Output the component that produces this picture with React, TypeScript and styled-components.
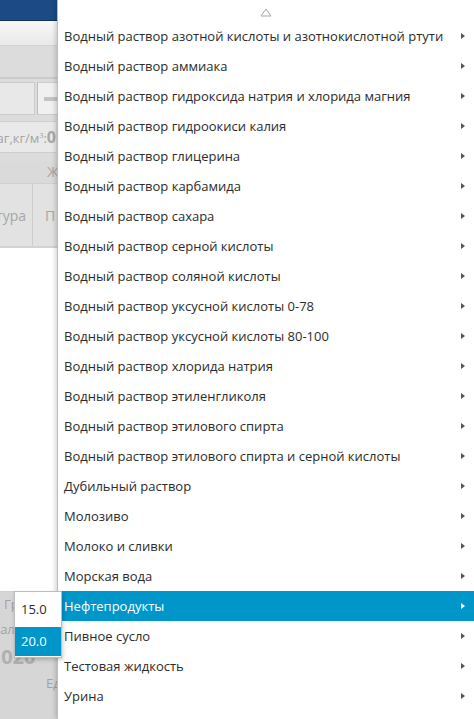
import styled, { createGlobalStyle } from "styled-components";

const items = [
  "Водный раствор азотной кислоты и азотнокислотной ртути",
  "Водный раствор аммиака",
  "Водный раствор гидроксида натрия и хлорида магния",
  "Водный раствор гидроокиси калия",
  "Водный раствор глицерина",
  "Водный раствор карбамида",
  "Водный раствор сахара",
  "Водный раствор серной кислоты",
  "Водный раствор соляной кислоты",
  "Водный раствор уксусной кислоты 0-78",
  "Водный раствор уксусной кислоты 80-100",
  "Водный раствор хлорида натрия",
  "Водный раствор этиленгликоля",
  "Водный раствор этилового спирта",
  "Водный раствор этилового спирта и серной кислоты",
  "Дубильный раствор",
  "Молозиво",
  "Молоко и сливки",
  "Морская вода",
  "Нефтепродукты",
  "Пивное сусло",
  "Тестовая жидкость",
  "Урина",
];

const Accent = "#0096c9";

const GlobalStyle = createGlobalStyle`
  html, body {
    margin: 0;
    padding: 0;
    background: #ffffff;
  }
  body {
    font-family: "Open Sans", "Noto Sans", sans-serif;
  }
`;

const App = () => {
  return (
    <Screen>
      <GlobalStyle />
      <Backdrop>
        <TitleBar />
        <Toolbar />
        <GreyBand />
        <ButtonRow>
          <ToolButton />
          <ToolButton $wide>
            <Dash />
          </ToolButton>
        </ButtonRow>
        <FieldRow>
          <span>
            Плотность, маг,кг/м<sup>3</sup>:<b>0</b>
          </span>
        </FieldRow>
        <GroupHeader>Ж</GroupHeader>
        <TableHead>
          <HeadCell $w={33}>Температура</HeadCell>
          <HeadCell $w={60}>П</HeadCell>
        </TableHead>
        <TableBody />
        <Footer>
          <FooterLabel>Группа</FooterLabel>
          <FooterLabel $shift={-26}>Шкала</FooterLabel>
          <FooterValue>1.020</FooterValue>
          <FooterUnit>Ед</FooterUnit>
        </Footer>
      </Backdrop>

      <Menu>
        <ScrollUp>
          <svg width="12" height="9" viewBox="0 0 12 9">
            <path d="M6 1 L11 8 L1 8 Z" fill="none" stroke="#a8a8a8" strokeWidth="1" />
          </svg>
        </ScrollUp>
        {items.map((label) => {
          const active = label === "Нефтепродукты";
          return (
            <MenuItem key={label} $active={active}>
              <span>{label}</span>
              <Caret $active={active} />
            </MenuItem>
          );
        })}
      </Menu>

      <SubMenu>
        <SubItem>15.0</SubItem>
        <SubItem $active>20.0</SubItem>
      </SubMenu>
    </Screen>
  );
};

const Screen = styled.div`
  position: relative;
  width: 474px;
  height: 719px;
  overflow: hidden;
`;

const Backdrop = styled.div`
  display: flex;
  flex-direction: column;
  width: 474px;
  height: 719px;
  background: #dcdcdc;
  color: #9a9a9a;
  font-size: 13px;
`;

const TitleBar = styled.div`
  height: 20px;
  background: #1c4a84;
  border-bottom: 1px solid #10325c;
`;

const Toolbar = styled.div`
  height: 24px;
  background: linear-gradient(#f8f8f8, #e9e9e9);
  border-bottom: 1px solid #d2d2d2;
`;

const GreyBand = styled.div`
  height: 31px;
  background: #dcdcdc;
  border-bottom: 2px solid #cbcbcb;
`;

const ButtonRow = styled.div`
  display: flex;
  gap: 2px;
  height: 33px;
  padding: 3px 0 6px;
  background: #dcdcdc;
`;

const ToolButton = styled.div<{ $wide?: boolean }>`
  display: flex;
  align-items: center;
  width: ${(p) => (p.$wide ? 80 : 28)}px;
  background: ${(p) => (p.$wide ? "#f0f0f0" : "#e8e8e8")};
  border: 1px solid #cccccc;
  border-left: ${(p) => (p.$wide ? "1px solid #bdbdbd" : "none")};
  padding-left: 6px;
`;

const Dash = styled.div`
  width: 40px;
  height: 4px;
  background: #c4c4c4;
`;

const FieldRow = styled.div`
  display: flex;
  justify-content: flex-end;
  align-items: center;
  width: 56px;
  height: 30px;
  overflow: hidden;
  white-space: nowrap;
  background: #e9e9e9;
  border-top: 1px solid #cfcfcf;
  border-bottom: 1px solid #cfcfcf;
  font-size: 13px;
  color: #a4a4a4;
  margin-bottom: 8px;

  sup {
    font-size: 7px;
  }
  b {
    font-size: 16px;
    color: #a8a8a8;
  }
`;

const GroupHeader = styled.div`
  height: 22px;
  line-height: 22px;
  padding-left: 47px;
  background: #dadada;
  color: #a6a6a6;
  font-size: 14px;
  border-bottom: 1px solid #d0d0d0;
`;

const TableHead = styled.div`
  display: flex;
  height: 62px;
  background: #e2e2e2;
  border-bottom: 2px solid #d3d3d3;
`;

const HeadCell = styled.div<{ $w: number }>`
  display: flex;
  align-items: center;
  justify-content: flex-end;
  width: ${(p) => p.$w}px;
  flex: none;
  overflow: hidden;
  white-space: nowrap;
  padding-right: 6px;
  box-sizing: border-box;
  border-right: 1px solid #cdcdcd;
  font-size: 14px;
  color: #a6a6a6;

  & + & {
    justify-content: flex-start;
    padding-left: 12px;
  }
`;

const TableBody = styled.div`
  height: 343px;
  background: #ffffff;
  border-bottom: 1px solid #cfcfcf;
`;

const Footer = styled.div`
  flex: 1;
  display: flex;
  flex-direction: column;
  padding-left: 6px;
  background: #d6d6d6;
  font-size: 13px;
  color: #a2a2a2;
  overflow: hidden;
  white-space: nowrap;
`;

const FooterLabel = styled.div<{ $shift?: number }>`
  height: 25px;
  line-height: 25px;
  margin-left: ${(p) => p.$shift ?? -2}px;
`;

const FooterValue = styled.div`
  font-size: 20px;
  font-weight: bold;
  margin-left: -22px;
  color: #b0b0b0;
  height: 30px;
  line-height: 30px;
`;

const FooterUnit = styled.div`
  padding-left: 40px;
  height: 22px;
  line-height: 22px;
`;

const Menu = styled.div`
  position: absolute;
  left: 57px;
  top: 0;
  right: 0;
  bottom: 0;
  display: flex;
  flex-direction: column;
  background: #ffffff;
  border-left: 1px solid #bdbdbd;
  box-shadow: -2px 0 4px rgba(0, 0, 0, 0.15);
`;

const ScrollUp = styled.div`
  display: flex;
  justify-content: center;
  align-items: flex-start;
  height: 21px;
  padding-top: 8px;
  box-sizing: border-box;
`;

const MenuItem = styled.div<{ $active?: boolean }>`
  display: flex;
  align-items: center;
  justify-content: space-between;
  flex: none;
  height: 30px;
  padding: 0 9px 0 6px;
  background: ${(p) => (p.$active ? Accent : "transparent")};
  color: ${(p) => (p.$active ? "#ffffff" : "#2b2b2b")};
  font-size: 13px;
  white-space: nowrap;
`;

const Caret = styled.span<{ $active?: boolean }>`
  width: 0;
  height: 0;
  border-top: 3.5px solid transparent;
  border-bottom: 3.5px solid transparent;
  border-left: 4px solid ${(p) => (p.$active ? "#ffffff" : "#555555")};
`;

const SubMenu = styled.div`
  position: absolute;
  left: 14px;
  top: 591px;
  width: 46px;
  display: flex;
  flex-direction: column;
  gap: 3px;
  padding: 3px 0 1px;
  background: #ffffff;
  border: 1px solid #bcbcbc;
  box-shadow: 1px 2px 4px rgba(0, 0, 0, 0.2);
`;

const SubItem = styled.div<{ $active?: boolean }>`
  height: 29px;
  line-height: 29px;
  padding-left: 6px;
  font-size: 13px;
  background: ${(p) => (p.$active ? Accent : "transparent")};
  color: ${(p) => (p.$active ? "#ffffff" : "#2b2b2b")};
`;

export default App;
